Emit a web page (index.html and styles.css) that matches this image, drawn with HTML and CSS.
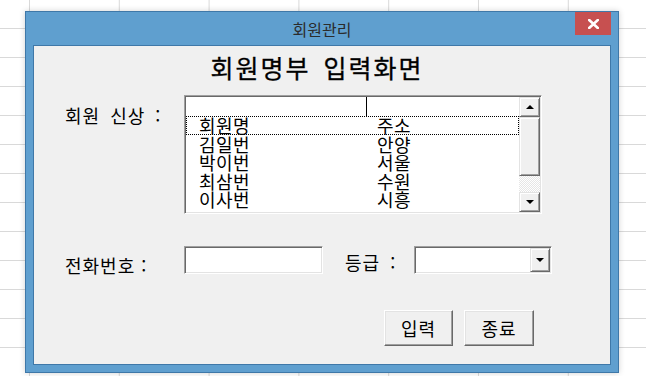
FILE: index.html
```html
<!DOCTYPE html>
<html lang="ko">
<head>
<meta charset="utf-8">
<title>회원관리</title>
<link rel="stylesheet" href="styles.css">
</head>
<body>
<div class="window">
  <div class="titlebar">
    <span class="title">회원관리</span>
    <button class="close" type="button" aria-label="닫기">
      <svg width="11" height="10" viewBox="0 0 11 10"><path d="M1.2 1 L9.8 9 M9.8 1 L1.2 9" stroke="#fff" stroke-width="2.6" stroke-linecap="square" fill="none"/></svg>
    </button>
  </div>
  <div class="client">
    <h1 class="heading">회원명부 입력화면</h1>
    <div class="row row-list">
      <span class="label label-list">회원 신상 :</span>
      <div class="listbox">
        <div class="list-body">
          <div class="list-header"><span class="col1"></span><span class="col2"></span></div>
          <div class="list-row focus"><span class="col1">회원명</span><span class="col2">주소</span></div>
          <div class="list-row"><span class="col1">김일번</span><span class="col2">안양</span></div>
          <div class="list-row"><span class="col1">박이번</span><span class="col2">서울</span></div>
          <div class="list-row"><span class="col1">최삼번</span><span class="col2">수원</span></div>
          <div class="list-row"><span class="col1">이사번</span><span class="col2">시흥</span></div>
        </div>
        <div class="scrollbar">
          <div class="sb-btn"><span class="arrow-up"></span></div>
          <div class="sb-thumb"></div>
          <div class="sb-track"></div>
          <div class="sb-btn"><span class="arrow-down"></span></div>
        </div>
      </div>
    </div>
    <div class="row row-phone">
      <span class="label label-phone">전화번호 :</span>
      <div class="textbox"></div>
      <span class="label label-grade">등급 :</span>
      <div class="combo"><div class="combo-btn"><span class="arrow-down"></span></div></div>
    </div>
    <div class="row row-buttons">
      <button class="btn btn-input" type="button">입력</button>
      <button class="btn btn-exit" type="button">종료</button>
    </div>
  </div>
</div>
</body>
</html>
```

FILE: styles.css
```css
html, body {
  margin: 0;
  padding: 0;
}
body {
  width: 646px;
  height: 376px;
  overflow: hidden;
  background-color: #fff;
  background-image:
    linear-gradient(to right, #d9d9d9 1px, transparent 1px),
    linear-gradient(to bottom, #d9d9d9 1px, transparent 1px);
  background-size: 89.8px 29px;
  background-position: 29px 28px;
  font-family: "Noto Sans CJK KR", "Noto Sans", sans-serif;
  color: #000;
  padding-top: 11px;
  padding-left: 25px;
  box-sizing: border-box;
}
.window {
  width: 594px;
  height: 362px;
  box-sizing: border-box;
  border: 1px solid #3f78a8;
  background: #5f9fcf;
  box-shadow: 0 0 6px rgba(0,0,0,0.18);
}
.titlebar {
  height: 33px;
  display: grid;
  grid-template-columns: 1fr auto 1fr;
}
.title {
  grid-column: 2;
  font-size: 16px;
  line-height: 35px;
  color: #2b2b2b;
}
.close {
  grid-column: 3;
  justify-self: end;
  align-self: start;
  width: 36px;
  height: 23px;
  margin: 0 7px 0 0;
  padding: 0;
  border: 0;
  background: #c75050;
  display: flex;
  align-items: center;
  justify-content: center;
}
.client {
  margin: 0 7px 7px;
  height: 320px;
  box-sizing: border-box;
  border: 1px solid #3f78a8;
  background: #f0f0f0;
}
.heading {
  margin: 0;
  padding: 4px 10px 0 0;
  font-size: 25px;
  font-weight: 400;
  line-height: 34px;
  letter-spacing: 2px;
  word-spacing: 4px;
  text-align: center;
  -webkit-text-stroke: 0.3px #000;
}
.row {
  display: flex;
  padding-left: 31px;
}
.label {
  font-size: 18px;
  letter-spacing: 1px;
  white-space: pre;
}
.row-list {
  margin-top: 11px;
}
.label-list {
  width: 119px;
  line-height: 24px;
  margin-top: 8px;
  word-spacing: 4px;
}
.listbox {
  width: 358px;
  height: 119px;
  box-sizing: border-box;
  border: 1px solid;
  border-color: #a0a0a0 #fff #fff #a0a0a0;
  box-shadow: inset 1px 1px 0 #696969, inset -1px -1px 0 #e3e3e3;
  padding: 1px;
  display: flex;
  background: #fff;
}
.list-body {
  flex: 1;
  overflow: hidden;
  font-size: 18px;
}
.list-header {
  height: 19px;
  display: flex;
}
.list-header .col1 {
  border-right: 1px solid #000;
}
.list-row {
  height: 18.5px;
  line-height: 18.5px;
  display: flex;
  white-space: nowrap;
}
.col1 {
  width: 181px;
  box-sizing: border-box;
  padding-left: 13px;
  flex: none;
  letter-spacing: 0.5px;
}
.col2 {
  padding-left: 10px;
  letter-spacing: 0.5px;
}
.focus {
  outline: 1px dotted #000;
  outline-offset: -1px;
}
.scrollbar {
  width: 21px;
  display: flex;
  flex-direction: column;
  background: #f0f0f0;
}
.sb-btn, .sb-thumb, .combo-btn {
  box-sizing: border-box;
  border: 1px solid;
  border-color: #e3e3e3 #696969 #696969 #e3e3e3;
  box-shadow: inset 1px 1px 0 #fff, inset -1px -1px 0 #a0a0a0;
  background: #f0f0f0;
}
.sb-btn {
  height: 20px;
  display: flex;
  align-items: center;
  justify-content: center;
}
.sb-thumb {
  height: 59px;
}
.sb-track {
  flex: 1;
  background: repeating-conic-gradient(#fff 0 25%, #e6e6e6 0 50%) 0 0 / 2px 2px;
}
.arrow-up, .arrow-down {
  width: 0;
  height: 0;
  border-left: 4px solid transparent;
  border-right: 4px solid transparent;
}
.arrow-up {
  border-bottom: 4px solid #000;
}
.arrow-down {
  border-top: 4px solid #000;
}
.row-phone {
  margin-top: 32px;
}
.label-phone {
  width: 119px;
  line-height: 28px;
  padding-top: 5px;
}
.label-grade {
  width: 69px;
  margin-left: 22px;
  line-height: 28px;
  padding-top: 2px;
  word-spacing: 4px;
}
.textbox, .combo {
  height: 28px;
  box-sizing: border-box;
  border: 1px solid;
  border-color: #a0a0a0 #fff #fff #a0a0a0;
  box-shadow: inset 1px 1px 0 #696969, inset -1px -1px 0 #e3e3e3;
  background: #fff;
}
.textbox {
  width: 139px;
}
.combo {
  width: 138px;
  padding: 1px;
  display: flex;
  justify-content: flex-end;
}
.combo-btn {
  width: 20px;
  display: flex;
  align-items: center;
  justify-content: center;
}
.row-buttons {
  margin-top: 31px;
  justify-content: flex-end;
  padding-right: 76px;
  gap: 11px;
}
.btn {
  height: 36px;
  margin: 0;
  padding: 0;
  box-sizing: border-box;
  border: 1px solid;
  border-color: #fff #696969 #696969 #fff;
  box-shadow: inset -1px -1px 0 #a0a0a0, inset 1px 1px 0 #e3e3e3;
  background: #f0f0f0;
  font-family: "Noto Sans CJK KR", sans-serif;
  font-size: 18px;
  color: #000;
  letter-spacing: 1px;
}
.btn-input {
  width: 69px;
}
.btn-exit {
  width: 70px;
}
```
